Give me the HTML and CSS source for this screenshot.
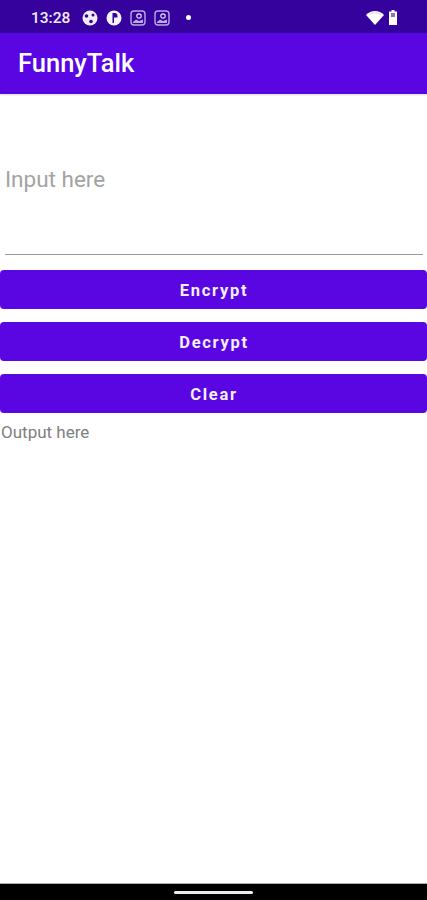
FILE: index.html
```html
<!DOCTYPE html>
<html lang="en">
  <head>
    <meta charset="UTF-8" />
    <meta name="viewport" content="width=device-width, initial-scale=1.0" />
    <title>FunnyTalk</title>
    <link rel="stylesheet" href="styles.css">
  </head>
  <body>
    <div class="phone">
      <div class="status_bar">
        <div class="status_left">
          <span class="time">13:28</span>
          <svg class="s_icon" viewBox="0 0 16 16">
            <circle cx="8" cy="8" r="7.5" fill="#f1ecfb" />
            <circle cx="4.500" cy="6" r="1.800" fill="#36029e" />
            <circle cx="11" cy="5" r="1.500" fill="#36029e" />
            <circle cx="9" cy="11.500" r="1.800" fill="#36029e" />
          </svg>
          <svg class="s_icon" viewBox="0 0 16 16">
            <circle cx="8" cy="8" r="7.5" fill="#f6f3fc" />
            <rect x="6.500" y="3" width="1.500" height="10" fill="#36029e" />
            <path d="M8 3h1.500a3 3 0 0 1 2 3v1.500h-3.500z" fill="#36029e" />
          </svg>
          <svg class="s_icon" viewBox="0 0 16 16">
            <rect x="1" y="1" width="14" height="14" rx="3" fill="none" stroke="#b9a9e2" stroke-width="1.400" />
            <circle cx="9" cy="6" r="2.200" fill="none" stroke="#e6dff6" stroke-width="1.200" />
            <path d="M3 12l3-2.500 3 1.500 4-1.500v3.500H3z" fill="#b9a9e2" />
          </svg>
          <svg class="s_icon" viewBox="0 0 16 16">
            <rect x="1" y="1" width="14" height="14" rx="3" fill="none" stroke="#b9a9e2" stroke-width="1.400" />
            <circle cx="9" cy="6" r="2.200" fill="none" stroke="#e6dff6" stroke-width="1.200" />
            <path d="M3 12l3-2.500 3 1.500 4-1.500v3.500H3z" fill="#b9a9e2" />
          </svg>
          <span class="dot"></span>
        </div>
        <div class="status_right">
          <svg class="wifi" viewBox="0 0 18 14">
            <path d="M0 4C2.500 1.300 5.800 0 9 0s6.500 1.300 9 4L9 14z" fill="#fff" />
            <path d="M3 3.600C4.800 2.400 6.800 1.800 9 1.800s4.200 0.600 6 1.800" fill="none" stroke="#cfc4ec" stroke-width="0.800" />
          </svg>
          <svg class="battery" viewBox="0 0 8 15">
            <path d="M2.500 0h3v1.500h2.500v13.500h-8v-13.500h2.500z" fill="#fff" />
            <rect x="2" y="3" width="4" height="4" fill="#8a6fd0" />
          </svg>
        </div>
      </div>

      <div class="app_bar">FunnyTalk</div>

      <div class="content">
        <div class="input_wrap">
          <div class="input_text">Input here</div>
        </div>
        <div class="buttons">
          <button class="btn">Encrypt</button>
          <button class="btn">Decrypt</button>
          <button class="btn">Clear</button>
        </div>
        <div class="output">Output here</div>
      </div>

      <div class="nav_bar">
        <div class="nav_handle"></div>
      </div>
    </div>
  </body>
</html>
```

FILE: styles.css
```css
html {
  top: 0;
}
body {
  margin: 0;
  background: #fff;
  font-family: "Roboto", sans-serif;
}
.phone {
  display: flex;
  flex-direction: column;
  width: 427px;
  height: 900px;
  overflow: hidden;
}
.status_bar {
  display: flex;
  justify-content: space-between;
  align-items: center;
  height: 33px;
  padding: 2px 30px 0 31px;
  box-sizing: border-box;
  background: #36029e;
  color: #f1ecfb;
}
.status_left {
  display: flex;
  align-items: center;
}
.time {
  font-size: 15.5px;
  font-weight: 500;
  margin-right: 12px;
}
.s_icon {
  width: 16px;
  height: 16px;
  margin-right: 8px;
}
.dot {
  width: 5px;
  height: 5px;
  margin-left: 8px;
  border-radius: 50%;
  background: #fff;
}
.status_right {
  display: flex;
  align-items: center;
}
.wifi {
  width: 18px;
  height: 14px;
  margin-right: 5px;
}
.battery {
  width: 8px;
  height: 15px;
}
.app_bar {
  height: 61px;
  padding-left: 18px;
  line-height: 61px;
  background: #5a06e2;
  color: #fff;
  font-size: 25.5px;
  font-weight: 500;
  box-shadow: 0 1px 2px rgba(0, 0, 0, 0.15);
}
.content {
  flex: 1;
}
.input_wrap {
  height: 161px;
  margin: 0 4px 0 5px;
  border-bottom: 1px solid #9a9a9a;
  box-sizing: border-box;
  padding-top: 71px;
}
.input_text {
  color: #a3a3a3;
  font-size: 22.5px;
  line-height: 28px;
}
.buttons {
  display: flex;
  flex-direction: column;
  gap: 13px;
  margin-top: 15px;
}
.btn {
  height: 39px;
  padding: 2px 0 0 1px;
  border: none;
  border-radius: 4px;
  background: #5a06e2;
  color: #f4effd;
  font-family: "Roboto", sans-serif;
  font-size: 16.5px;
  font-weight: 700;
  letter-spacing: 1.7px;
}
.output {
  margin-top: 10px;
  padding-left: 1px;
  color: #808080;
  font-size: 17px;
  line-height: 19px;
}
.nav_bar {
  display: flex;
  justify-content: center;
  align-items: center;
  height: 17px;
  background: #000;
  border-top: 1px solid #aaa;
  box-sizing: border-box;
}
.nav_handle {
  width: 79px;
  height: 3px;
  border-radius: 2px;
  background: #eee;
}
```
